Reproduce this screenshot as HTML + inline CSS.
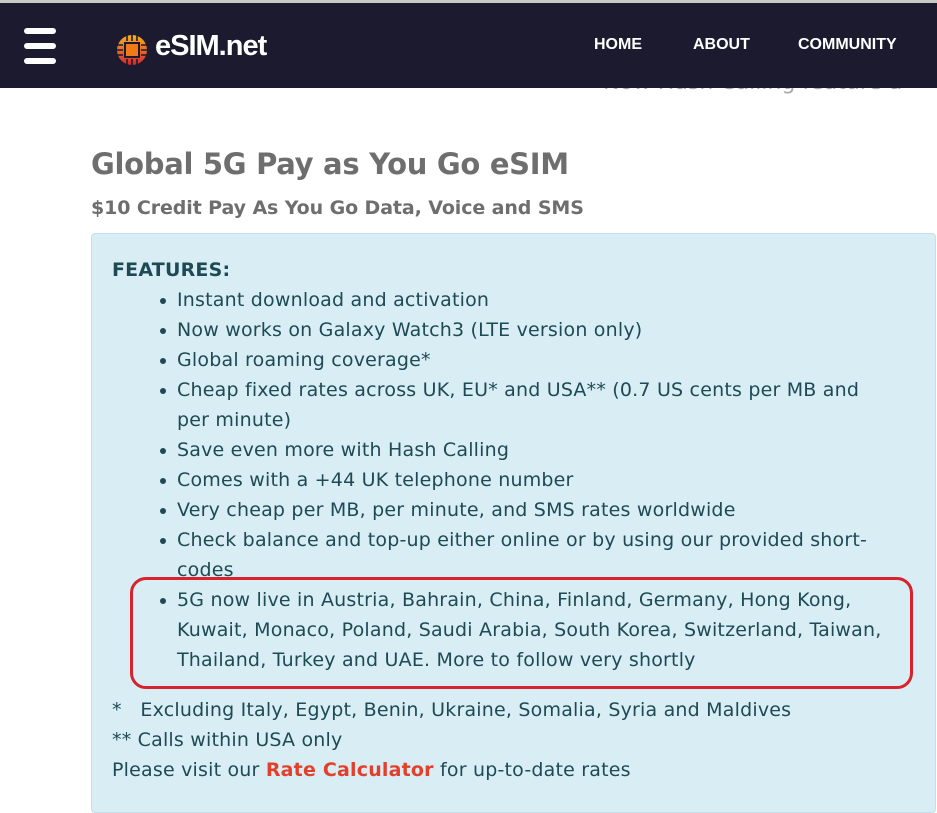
<!DOCTYPE html>
<html><head><meta charset="utf-8"><style>
*{margin:0;padding:0;box-sizing:border-box}
body{width:937px;height:804px;overflow:hidden;background:#fff;font-family:"DejaVu Sans","Liberation Sans",sans-serif;position:relative}
.top{position:absolute;left:0;top:0;width:937px;height:3px;background:#c8c8c8}
.hdr{position:absolute;left:0;top:3px;width:937px;height:85px;background:#1b1a2f}
.ham{position:absolute;left:24px;width:32px;height:6px;border-radius:3px;background:#fff}
.logo{position:absolute;left:155px;top:27px;color:#fff;font-family:"Liberation Sans",sans-serif;font-size:29px;font-weight:bold;letter-spacing:-1px}
.nav{position:absolute;top:33px;color:#fff;font-size:16px;font-weight:bold;font-family:"Liberation Sans",sans-serif}
.ghost{position:absolute;left:603px;top:70px;font-size:22px;color:#aaa;white-space:nowrap}
h1{position:absolute;left:91px;top:147px;font-size:29px;color:#6e6e6e;font-weight:bold;font-family:"DejaVu Sans",sans-serif;letter-spacing:-0.3px}
h2{position:absolute;left:91px;top:197px;font-size:19px;color:#6e6e6e;font-weight:bold;letter-spacing:-0.1px}
.box{position:absolute;left:91px;top:233px;width:845px;height:580px;background:#d8edf4;border:1px solid #c2e0ea;border-radius:4px}
.t{position:absolute;left:112px;font-size:19px;color:#1e4a55;white-space:nowrap;line-height:30px;letter-spacing:0.2px}
.b::before{content:"";position:absolute;left:-17px;top:13px;width:6px;height:6px;border-radius:50%;background:#1e4a55}
.b{left:177px}
.red{position:absolute;left:130px;top:577px;width:783px;height:112px;border:3px solid #d8222d;border-radius:16px}
a{color:#e2402a;font-weight:bold;text-decoration:none}
</style></head><body>
<div class="top"></div>
<div class="ghost">Now Hash Calling feature a</div>
<div class="hdr">
<div class="ham" style="top:25px"></div><div class="ham" style="top:40px"></div><div class="ham" style="top:55px"></div>
<svg style="position:absolute;left:115px;top:30px" width="34" height="34" viewBox="0 0 34 34">
<defs><linearGradient id="g" x1="0" y1="0" x2="0" y2="1"><stop offset="0" stop-color="#f8b020"/><stop offset="1" stop-color="#d8262e"/></linearGradient></defs>
<circle cx="17" cy="17" r="15" fill="url(#g)"/>
<rect x="10" y="10" width="14" height="14" fill="#f07a18" stroke="#1b1a2f" stroke-width="2"/>
<path d="M2 12h6M2 17h6M2 22h6M26 12h6M26 17h6M26 22h6M12 2v6M17 2v6M22 2v6M12 26v6M17 26v6M22 26v6" stroke="#1b1a2f" stroke-width="1.6"/>
</svg>
<div class="logo">eSIM.net</div>
<div class="nav" style="left:594px">HOME</div>
<div class="nav" style="left:693px">ABOUT</div>
<div class="nav" style="left:798px">COMMUNITY</div>
</div>
<h1>Global 5G Pay as You Go eSIM</h1>
<h2>$10 Credit Pay As You Go Data, Voice and SMS</h2>
<div class="box"></div>
<div class="t" style="top:255px;font-weight:bold">FEATURES:</div>
<div class="t b" style="top:285px">Instant download and activation</div>
<div class="t b" style="top:315px">Now works on Galaxy Watch3 (LTE version only)</div>
<div class="t b" style="top:345px">Global roaming coverage*</div>
<div class="t b" style="top:375px">Cheap fixed rates across UK, EU* and USA** (0.7 US cents per MB and<br>per minute)</div>
<div class="t b" style="top:435px">Save even more with Hash Calling</div>
<div class="t b" style="top:465px">Comes with a +44 UK telephone number</div>
<div class="t b" style="top:495px">Very cheap per MB, per minute, and SMS rates worldwide</div>
<div class="t b" style="top:525px">Check balance and top-up either online or by using our provided short-<br>codes</div>
<div class="t b" style="top:585px">5G now live in Austria, Bahrain, China, Finland, Germany, Hong Kong,<br>Kuwait, Monaco, Poland, Saudi Arabia, South Korea, Switzerland, Taiwan,<br>Thailand, Turkey and UAE. More to follow very shortly</div>
<div class="red"></div>
<div class="t" style="top:695px">*&nbsp;&nbsp; Excluding Italy, Egypt, Benin, Ukraine, Somalia, Syria and Maldives</div>
<div class="t" style="top:725px">** Calls within USA only</div>
<div class="t" style="top:755px">Please visit our <a>Rate Calculator</a> for up-to-date rates</div>
</body></html>
